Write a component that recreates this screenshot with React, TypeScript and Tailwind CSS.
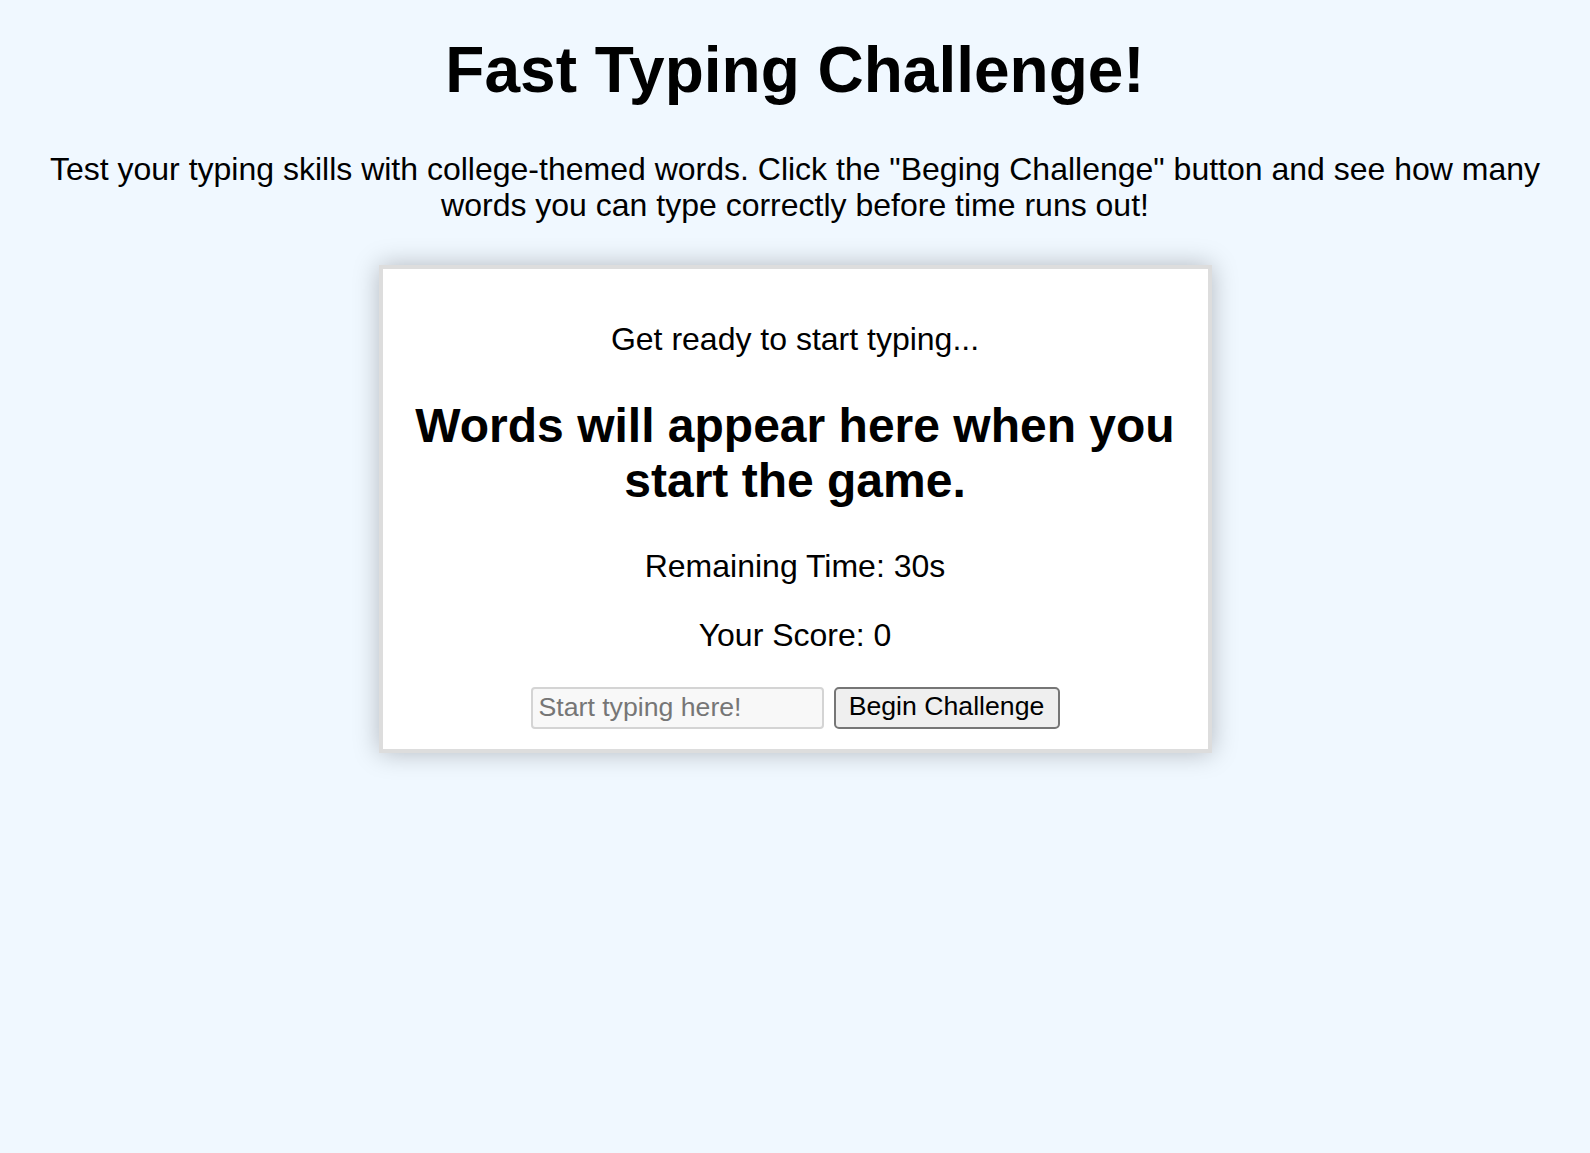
export default function App() {
  return (
    <div
      className="min-h-screen bg-[#f0f8ff] text-black px-4 pb-10 text-center"
      style={{ fontFamily: '"Liberation Sans", Arial, sans-serif' }}
    >
      <h1 className="pt-[34px] mb-[43px] text-[64px] font-bold leading-[73.5px]">
        Fast Typing Challenge!
      </h1>
      <p className="text-[32px] leading-[36.8px]">
        Test your typing skills with college-themed words. Click the "Beging Challenge" button and see how many words you can type correctly before time runs out!
      </p>

      {/* Game card */}
      <div className="mx-auto mt-[41px] w-[833px] bg-white border-4 border-[#dddddd] p-[20px] shadow-[0_0_24px_rgba(0,0,0,0.25)]">
        <p className="mt-[32px] text-[32px] leading-[36.8px]">Get ready to start typing...</p>
        <h2 className="mt-[40px] text-[48px] font-bold leading-[55.2px]">
          Words will appear here when you start the game.
        </h2>
        <p className="mt-[40px] text-[32px] leading-[36.8px]">Remaining Time: 30s</p>
        <p className="mt-[32px] text-[32px] leading-[36.8px]">Your Score: 0</p>

        <div className="mt-[33px] flex justify-center gap-[10px]">
          <input
            type="text"
            placeholder="Start typing here!"
            className="w-[293px] h-[42px] bg-[#f8f8f8] border-2 border-[#d4d4d4] rounded-[4px] px-[6px] text-[26.67px] placeholder:text-[#767676] outline-none"
          />
          <button className="w-[226px] h-[42px] pb-[3px] bg-[#efefef] border-2 border-[#767676] rounded-[5px] text-[26.67px] leading-none text-black">
            Begin Challenge
          </button>
        </div>
      </div>
    </div>
  );
}
